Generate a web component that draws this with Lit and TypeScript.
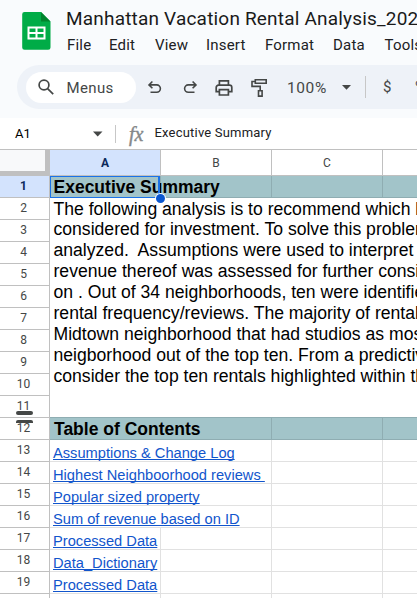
import { LitElement, html, css, nothing } from "lit";
import { customElement } from "lit/decorators.js";

const MENU = ["File", "Edit", "View", "Insert", "Format", "Data", "Tools"];

const SUMMARY = [
  "The following analysis is to recommend which b",
  "considered for investment. To solve this problem",
  "analyzed.\u00a0 Assumptions were used to interpret",
  "revenue thereof was assessed for further consid",
  "on . Out of 34 neighborhoods, ten were identified",
  "rental frequency/reviews. The majority of rentals",
  "Midtown neighborhood that had studios as most",
  "neigborhood out of the top ten. From a predictive",
  "consider the top ten rentals highlighted within th",
];

const LINKS = [
  "Assumptions & Change Log",
  "Highest Neighboorhood reviews\u00a0",
  "Popular sized property",
  "Sum of revenue based on ID",
  "Processed Data",
  "Data_Dictionary",
  "Processed Data",
];

@customElement("sheet-header")
class SheetHeader extends LitElement {
  static styles = css`
    :host { display: block; height: 118px; background: #f9fbfd; font-family: Roboto, "Liberation Sans", sans-serif; overflow: hidden; }
    .top { display: flex; height: 65px; }
    .logo { width: 29px; height: 38px; margin: 11.5px 0 0 22px; flex: none; }
    .names { margin-left: 15px; white-space: nowrap; }
    .title { margin-top: 7px; height: 23px; line-height: 23px; font-size: 19px; letter-spacing: 0.19px; color: #1a1a1a; }
    .menu { display: grid; grid-template-columns: 42px 46px 51px 59px 68px 51.500px 60px; margin: 5px 0 0 1px; height: 20px; line-height: 20px; font-size: 15px; letter-spacing: 0.2px; color: #202124; }
    .bar { display: flex; align-items: center; margin-left: 17px; width: 430px; height: 44px; border-radius: 22px; background: #eef2f8; color: #444746; }
    .search { display: flex; align-items: center; width: 110px; height: 31px; margin-left: 9px; border-radius: 16px; background: #fff; flex: none; }
    .search svg { margin: 0 11.500px 0 11px; }
    .search span { font-size: 15px; letter-spacing: 0.35px; margin-top: 1px; }
    svg { display: block; flex: none; }
    .undo { margin: 2px 0 0 11px; }
    .redo { margin: 2px 0 0 19px; }
    .print { margin: 1px 0 0 16px; }
    .paint { margin: 1px 0 0 16px; }
    .zoom { margin-left: 19px; width: 42px; font-size: 15.5px; letter-spacing: 0.6px; margin-top: 1px; flex: none; }
    .caret { margin: 1px 0 0 13px; }
    .rule { width: 1px; height: 22px; margin: 0 0 0 14px; background: #c7c7c7; flex: none; }
    .dollar { margin-left: 17px; width: 32px; font-size: 15px; flex: none; margin-top: -1px; }
    .pct { font-size: 15px; }
  `;
  render() {
    return html`
      <div class="top">
        <svg class="logo" viewBox="0 0 29 38">
          <path d="M2.500 0H19l9.500 9.500V35.500a2.300 2.300 0 0 1-2.300 2.300H2.500A2.300 2.300 0 0 1 .2 35.500V2.300A2.300 2.300 0 0 1 2.500 0z" fill="#00ac47"/>
          <path d="M19 0l9.500 9.500H19z" fill="#00832d"/>
          <path fill="#fff" fill-rule="evenodd" d="M5.500 14.500h18v13h-18zM7.500 16.500v3.500h6v-3.500zM15.500 16.500v3.500h6v-3.500zM7.500 22v3.500h6V22zM15.500 22v3.500h6V22z"/>
        </svg>
        <div class="names">
          <div class="title">Manhattan Vacation Rental Analysis_202</div>
          <div class="menu">${MENU.map((m) => html`<span>${m}</span>`)}</div>
        </div>
      </div>
      <div class="bar">
        <div class="search">
          <svg width="18" height="18" viewBox="0 0 18 18" fill="none" stroke="#444746" stroke-width="1.700"><circle cx="7" cy="7" r="4.900"/><path d="M10.600 10.600l5.600 5.600"/></svg>
          <span>Menus</span>
        </div>
        <svg class="undo" width="16" height="16" viewBox="0 0 16 16" fill="none" stroke="#444746" stroke-width="1.600"><path d="M5.400 1.500L2 4.900l3.400 3.400M2.200 4.900h7.500a3.700 3.700 0 0 1 0 7.400H3.500"/></svg>
        <svg class="redo" width="16" height="16" viewBox="0 0 16 16" fill="none" stroke="#444746" stroke-width="1.600"><path d="M10.600 1.500L14 4.900l-3.400 3.400M13.800 4.900H6.300a3.700 3.700 0 0 0 0 7.400h6.200"/></svg>
        <svg class="print" width="20" height="18" viewBox="0 0 20 18" fill="none" stroke="#444746" stroke-width="1.700"><path d="M5.400 6V1.800h9V6M5.400 12.700H2.200V8.500A2.300 2.300 0 0 1 4.500 6.200h11a2.300 2.300 0 0 1 2.300 2.300v4.200h-3.300"/><path d="M5.400 10.700h9v5.300h-9z"/></svg>
        <svg class="paint" width="18" height="20" viewBox="0 0 18 20" fill="none" stroke="#444746" stroke-width="1.600"><path d="M5.300 1.800h10.900v3.500H5.300zM5.300 3.500H2v4.900h8.200v4.300"/><path d="M8.500 12.800h3.600v5.300H8.500z"/></svg>
        <span class="zoom">100%</span>
        <svg class="caret" width="9" height="5" viewBox="0 0 9 5"><path d="M0 0h9L4.500 4.800z" fill="#444746"/></svg>
        <span class="rule"></span>
        <span class="dollar">$</span><span class="pct">%</span>
      </div>
    `;
  }
}

@customElement("formula-bar")
class FormulaBar extends LitElement {
  static styles = css`
    :host { display: flex; align-items: center; height: 31px; border-bottom: 1px solid #c0c0c0; background: #fff; font-family: Roboto, "Liberation Sans", sans-serif; color: #202124; white-space: nowrap; }
    .name { width: 78px; margin-left: 15px; font-size: 13px; color: #000; }
    .rule { width: 1px; height: 18px; margin: 0 13px 0 12px; background: #c7c7c7; }
    .fx { width: 25.500px; font: italic 20px/20px "Liberation Serif", serif; letter-spacing: 0; color: #85888a; -webkit-text-stroke: 0.4px #85888a; }
    .value { font-size: 13px; letter-spacing: 0.2px; margin-top: -2px; }
  `;
  render() {
    return html`
      <span class="name">A1</span>
      <svg width="10" height="6" viewBox="0 0 10 6"><path d="M0 .5h9.500L4.700 5.500z" fill="#444746"/></svg>
      <span class="rule"></span><span class="fx">fx</span>
      <span class="value">Executive Summary</span>
    `;
  }
}

@customElement("sheet-grid")
class SheetGrid extends LitElement {
  static styles = css`
    :host { display: block; height: 448px; background: #fff; overflow: hidden; font-family: "Liberation Sans", Arial, sans-serif; }
    * { box-sizing: border-box; }
    .cols { display: flex; height: 26px; }
    .corner { width: 50px; flex: none; background: #f8f9fa; border: solid #c0c0c0; border-width: 0 5px 5px 0; }
    .col { width: 111px; flex: none; border: solid #c0c0c0; border-width: 0 1px 1px 0; font: 12px/26px Roboto, sans-serif; text-align: center; color: #444746; }
    .col.on { background: #d3e3fd; font-weight: 700; color: #0b2a5b; }
    .body { display: flex; }
    .heads { width: 50px; flex: none; }
    .head { height: 22px; border: solid #c0c0c0; border-width: 0 1px 1px 0; font: 12px/20px Roboto, sans-serif; text-align: center; padding-right: 2px; color: #444746; position: relative; }
    .head.on { background: #d3e3fd; font-weight: 700; color: #0b2a5b; }
    .grip { position: absolute; left: 16px; width: 17px; height: 4px; border-radius: 2px; background: #444746; }
    .grip.up { bottom: 2px; }
    .grip.down { top: 2px; height: 3px; border-radius: 2px 2px 0 0; }
    .cells { width: 444px; flex: none; }
    .row { display: flex; height: 22px; }
    .cell { width: 111px; flex: none; border: solid #e1e1e1; border-width: 0 1px 1px 0; white-space: nowrap; padding-left: 3px; }
    .cell.wide { width: 222px; }
    .band .cell { background: #a2c4c9; border-color: #8fadb2; font-weight: 700; font-size: 17.500px; line-height: 22px; color: #000; }
    .band .cell.wide { padding-left: 4px; }
    .band .text { position: relative; z-index: 1; }
    .band .cell.selected { position: relative; padding-left: 3.500px; }
    .selected::before { content: ""; position: absolute; inset: 0 0 -1px 0; border: 1.500px solid #1a73e8; border-right-width: 2px; z-index: 2; }
    .selected::after { content: ""; position: absolute; right: -5px; bottom: -6px; width: 9px; height: 9px; border-radius: 50%; background: #0b57d0; box-shadow: 0 0 0 1px #fff; z-index: 3; }
    .merged { width: 367px; height: 220px; padding: 0 0 0 3.500px; border-bottom: 1px solid #8fadb2; font-size: 17.600px; color: #000; white-space: nowrap; overflow: hidden; }
    .line { height: 21px; line-height: 21px; }
    .line:first-child { line-height: 23px; }
    .link { font-size: 14.670px; line-height: 27px; color: #1155cc; text-decoration: underline; text-underline-offset: 1px; text-decoration-thickness: 1px; text-decoration-skip-ink: none; }
  `;
  render() {
    const rows = Array.from({ length: 20 }, (_, i) => i + 1);
    return html`
      <div class="cols">
        <div class="corner"></div>
        <div class="col on">A</div><div class="col">B</div><div class="col">C</div><div class="col"></div>
      </div>
      <div class="body">
        <div class="heads">
          ${rows.map((n) => html`<div class="head ${n === 1 ? "on" : ""}">${n < 20 ? n : nothing}${n === 11 ? html`<i class="grip up"></i>` : n === 12 ? html`<i class="grip down"></i>` : nothing}</div>`)}
        </div>
        <div class="cells">
          <div class="row band">
            <div class="cell selected"><span class="text">Executive Summary</span></div>
            <div class="cell"></div><div class="cell"></div><div class="cell"></div>
          </div>
          <div class="merged">${SUMMARY.map((l) => html`<div class="line">${l}</div>`)}</div>
          <div class="row band">
            <div class="cell wide"><span class="text">Table of Contents</span></div>
            <div class="cell"></div><div class="cell"></div>
          </div>
          ${LINKS.map((l, i) => html`
            <div class="row">
              <div class="cell ${i < 4 ? "wide" : ""}"><span class="link">${l}</span></div>
              ${i < 4 ? nothing : html`<div class="cell"></div>`}
              <div class="cell"></div><div class="cell"></div>
            </div>`)}
          <div class="row"><div class="cell"></div><div class="cell"></div><div class="cell"></div><div class="cell"></div></div>
        </div>
      </div>
    `;
  }
}

@customElement("app-root")
class AppRoot extends LitElement {
  static styles = css`
    :host { display: block; width: 417px; height: 598px; overflow: hidden; background: #fff; }
  `;
  render() {
    return html`<sheet-header></sheet-header><formula-bar></formula-bar><sheet-grid></sheet-grid>`;
  }
}
